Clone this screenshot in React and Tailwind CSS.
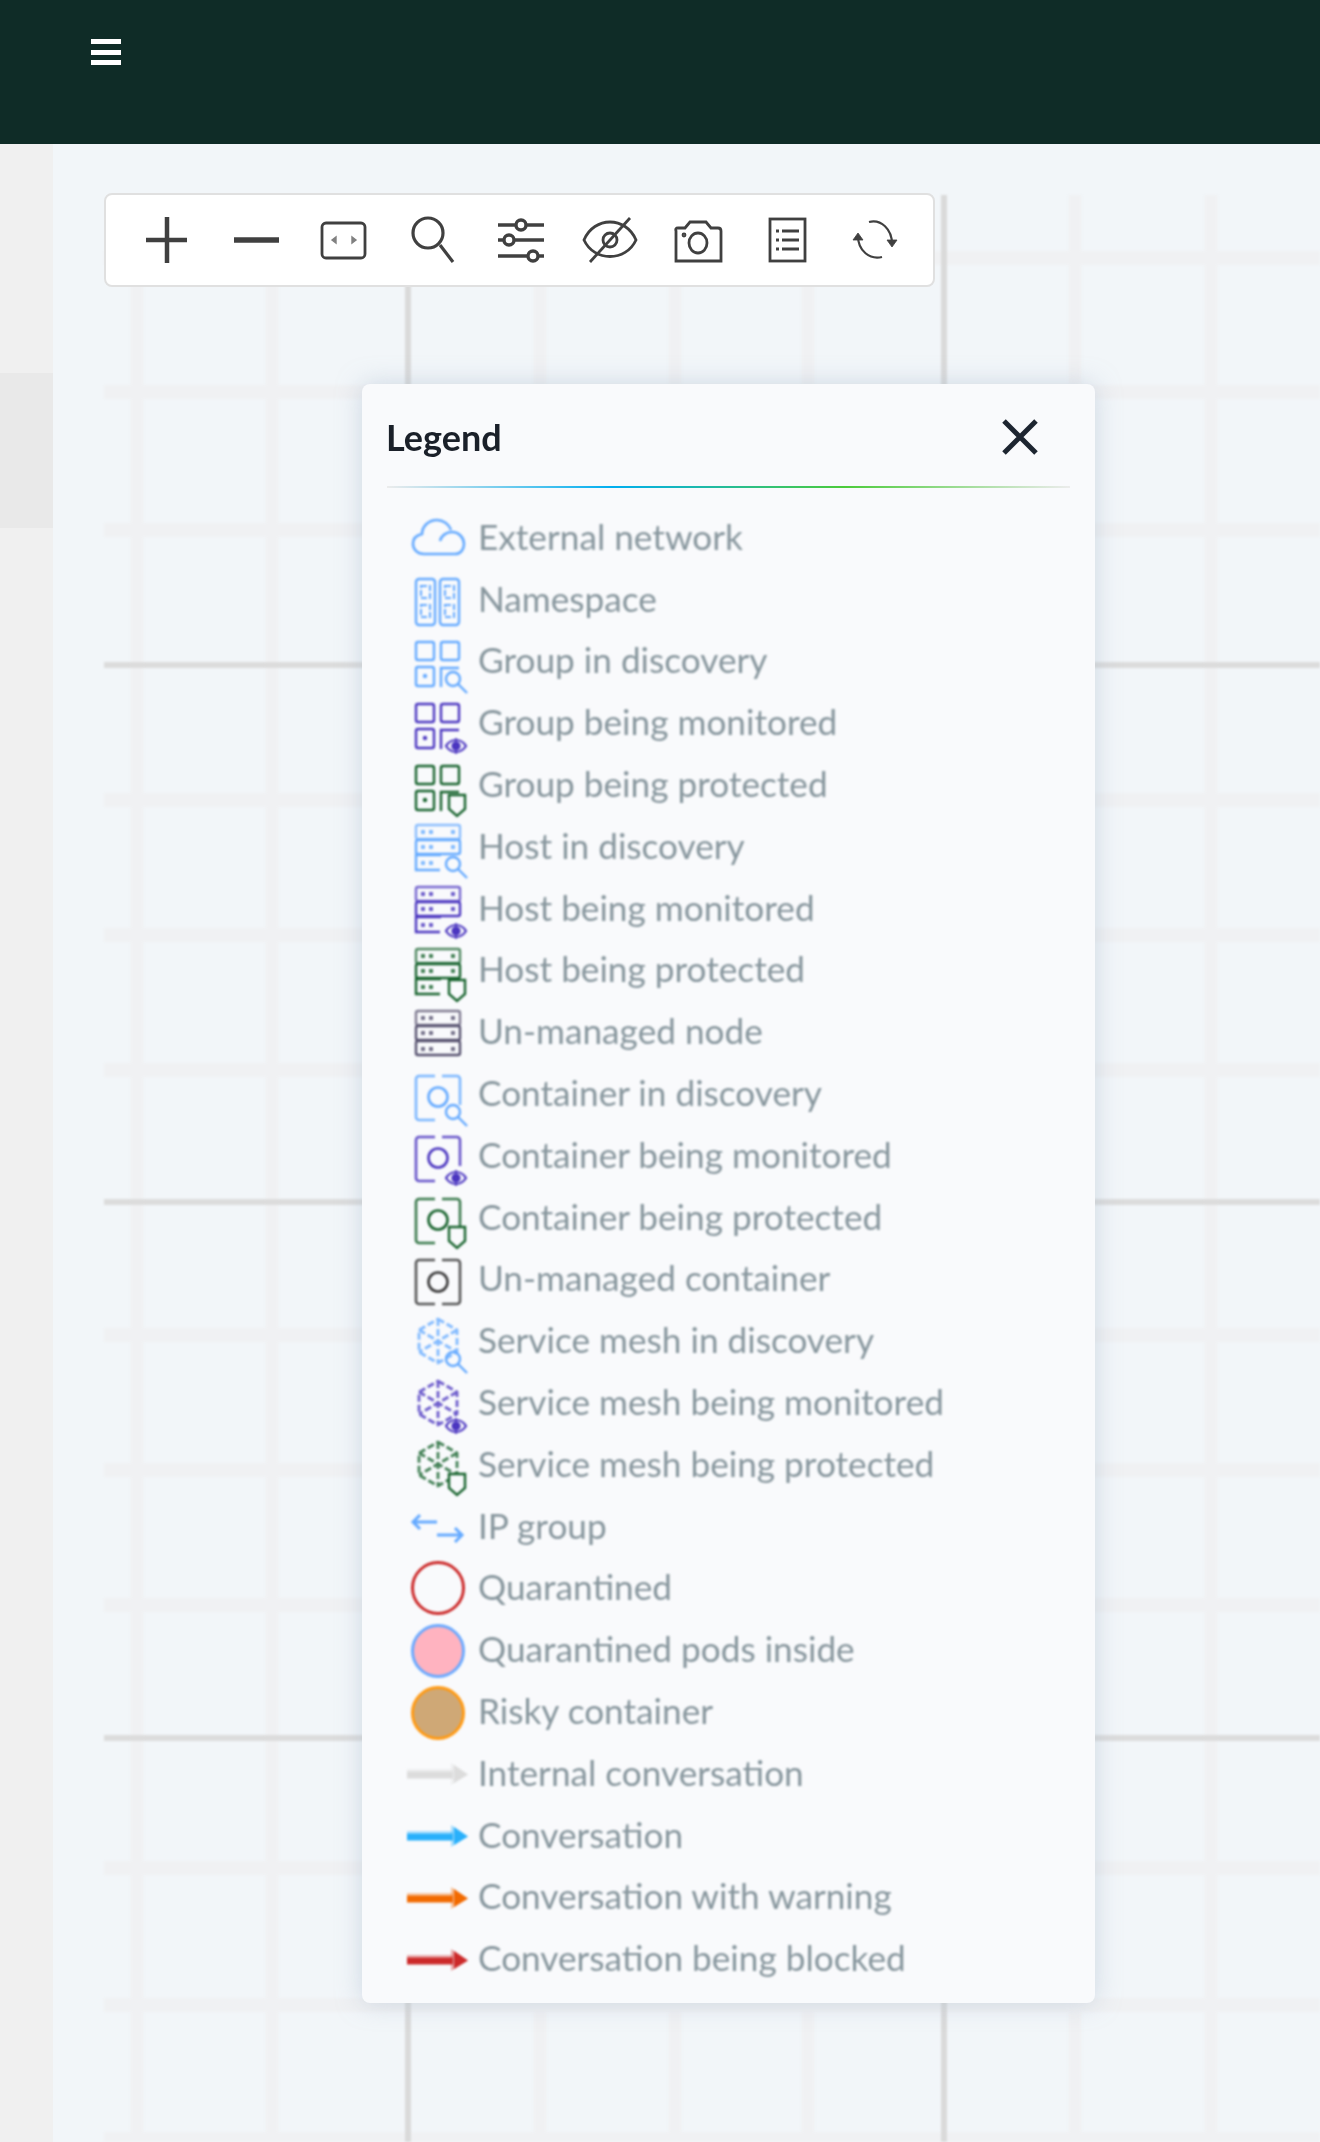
import React from "react";

const minorV = [33, 168, 436, 571, 704, 971, 1107];
const majorV = [304, 840];
const minorH = [63, 197, 335, 605, 740, 875, 1140, 1275, 1410, 1673, 1810, 1944];
const majorH = [470, 1007, 1543];

function Grid() {
  return (
    <svg className="absolute left-0 top-[2px] blur-[0.8px]" width="1216" height="1947" viewBox="0 0 1216 1947" fill="none">
      {minorH.map((y) => <path key={y} d={`M0 ${y}H1216`} stroke="#f0f1f3" strokeWidth="14" />)}
      {minorV.map((x) => <path key={x} d={`M${x} 0V1947`} stroke="#f0f1f3" strokeWidth="13" />)}
      {majorH.map((y) => <path key={y} d={`M0 ${y}H1216`} stroke="#dcdcdc" strokeWidth="6" />)}
      {majorV.map((x) => <path key={x} d={`M${x} 0V1947`} stroke="#dadada" strokeWidth="6" />)}
    </svg>
  );
}

const tool = { stroke: "#404040", fill: "none", strokeWidth: 2.8 };
const toolIcons = [
  <path d="M-21 0H20M0-23V23" {...tool} strokeWidth="4.5" />,
  <path d="M-22 0H23" {...tool} strokeWidth="5.5" />,
  <g {...tool}>
    <rect x="-22" y="-17" width="43" height="35" rx="4" />
    <path d="M-12 0L-8-3V3ZM12 0L8-3V3Z" fill="#808080" stroke="#808080" strokeWidth="1.4" />
  </g>,
  <g {...tool} strokeWidth="3.2">
    <circle cx="-5" cy="-7" r="15" />
    <path d="M7 5L20 22" />
  </g>,
  <g {...tool} strokeWidth="3.4">
    <path d="M-23-15H23M-23 0H23M-23 16H23" />
    <circle cx="0" cy="-15" r="5" fill="#fff" />
    <circle cx="-12" cy="0" r="5" fill="#fff" />
    <circle cx="12" cy="16" r="5" fill="#fff" />
  </g>,
  <g {...tool}>
    <path d="M-26 0C-16-24 16-24 26 0C16 22-16 22-26 0Z" />
    <circle cx="0" cy="0" r="7" />
    <path d="M20-22L-20 22" />
  </g>,
  <g {...tool}>
    <path d="M-22 21H23V-9Q23-12 20-12H13L8-18H-8L-13-12H-20Q-23-12-22-9Z" />
    <ellipse cx="0" cy="3" rx="9" ry="10" />
    <circle cx="-14" cy="-5" r="1" />
  </g>,
  <g {...tool}>
    <rect x="-17" y="-21" width="35" height="42" />
    <path d="M-5-9H12M-5 0H12M-5 9H12M-11-9H-8M-11 0H-8M-11 9H-8" />
  </g>,
  <g {...tool} strokeWidth="2.2">
    <path d="M-6-18C6-21 17-11 17 4M7 17C-5 20-17 11-17-4" />
    <path d="M12 0L17 7L22 0Z" fill="#404040" strokeWidth="0.8" />
    <path d="M-22 0L-17-7L-12 0Z" fill="#404040" strokeWidth="0.8" />
  </g>,
];

function Badge({ type, c }) {
  if (type === "search")
    return (
      <g stroke={c} fill="none" strokeWidth="2.4">
        <circle cx="48" cy="50" r="7" />
        <path d="M53 55L62 64" />
      </g>
    );
  if (type === "eye")
    return (
      <g stroke={c} fill="none" strokeWidth="2.2">
        <path d="M41 55C46 47 56 47 61 55C56 63 46 63 41 55Z" />
        <circle cx="51" cy="55" r="3.5" fill={c} />
        <path d="M51 47V63" strokeWidth="1.6" />
      </g>
    );
  if (type === "shield")
    return <path d="M44 42H60V56L52 63L44 56Z" fill="#f9fafc" stroke={c} strokeWidth="2.4" />;
  return null;
}

function Group({ c, badge }) {
  return (
    <g>
      <g stroke={c} fill="none" strokeWidth="2.4">
        <rect x="11" y="13" width="18" height="18" rx="2" />
        <rect x="36" y="13" width="18" height="18" rx="2" />
        <rect x="11" y="38" width="18" height="19" rx="2" />
        <circle cx="20" cy="47" r="1" />
        <path d="M36 58V39H54" />
      </g>
      <Badge type={badge} c={c} />
    </g>
  );
}

function Host({ c, badge }) {
  const dots = (y) => (
    <g fill={c} opacity="0.8">
      <rect x="16" y={y} width="4" height="4" />
      <rect x="24" y={y} width="4" height="4" />
      <rect x="46" y={y} width="4" height="4" />
    </g>
  );
  return (
    <g>
      <g stroke={c} fill="none" strokeWidth="2.4">
        <rect x="11" y="11" width="44" height="14" rx="2" opacity="0.75" />
        <rect x="11" y="26" width="44" height="14" rx="2" />
        {badge ? <path d="M36 41H11V56H35" /> : <rect x="11" y="41" width="44" height="14" rx="2" />}
      </g>
      {dots(16)}
      {dots(31)}
      <g fill={c} opacity="0.8">
        <rect x="16" y="47" width="4" height="4" />
        <rect x="24" y="47" width="4" height="4" />
        {!badge && <rect x="46" y="47" width="4" height="4" />}
      </g>
      <Badge type={badge} c={c} />
    </g>
  );
}

function Container({ c, badge }) {
  return (
    <g>
      <path
        d={badge ? "M30 14H14A3 3 0 0 0 11 17V55A3 3 0 0 0 14 58H30M37 14H52A3 3 0 0 1 55 17V43" : "M30 13H14A3 3 0 0 0 11 16V54A3 3 0 0 0 14 57H30M37 13H52A3 3 0 0 1 55 16V54A3 3 0 0 1 52 57H37"}
        stroke={c}
        fill="none"
        strokeWidth="2.6"
        opacity="0.85"
      />
      <circle cx="33" cy="35" r="9.5" stroke={c} fill="none" strokeWidth="2.6" />
      <Badge type={badge} c={c} />
    </g>
  );
}

function Mesh({ c, badge }) {
  return (
    <g>
      <g stroke={c} fill="none" strokeWidth="2.8" opacity="0.8" strokeDasharray="7 3">
        <path d="M33 10L52 21V43L33 54L14 43V21Z" />
        <path d="M33 10V54M14 21L52 43M52 21L14 43" />
      </g>
      <Badge type={badge} c={c} />
    </g>
  );
}

function Arrow({ c }) {
  return (
    <g>
      <rect x="2" y="28" width="46" height="3.5" fill={c} opacity="0.35" />
      <rect x="2" y="30.5" width="46" height="7" fill={c} />
      <path d="M46 22L63 33.5L46 44Z" fill={c} opacity="0.4" />
      <path d="M49 24L63 33.5L49 42Z" fill={c} />
    </g>
  );
}

const B = "#65aaff";
const P = "#4b36c0";
const G = "#17632d";

const rows = [
  ["External network", (
    <path d="M19 49H50C56 49 59 44 59 39C59 33 54 27 47 27C41 27 36 31 35 36M19 49C12 49 8 44 8 39C8 33 12 30 17 29C17 21 24 15 32 15C38 15 44 19 46 25" stroke={B} fill="none" strokeWidth="2.6" />
  )],
  ["Namespace", (
    <g stroke={B} fill="none" strokeWidth="2.4">
      <rect x="11" y="12" width="19" height="46" rx="3" />
      <rect x="35" y="12" width="19" height="46" rx="3" />
      <path d="M16 19h9v12h-9zM16 38h9v12h-9zM40 19h9v12h-9zM40 38h9v12h-9z" strokeWidth="2" strokeDasharray="6 2" />
    </g>
  )],
  ["Group in discovery", <Group c={B} badge="search" />],
  ["Group being monitored", <Group c={P} badge="eye" />],
  ["Group being protected", <Group c={G} badge="shield" />],
  ["Host in discovery", <Host c={B} badge="search" />],
  ["Host being monitored", <Host c={P} badge="eye" />],
  ["Host being protected", <Host c={G} badge="shield" />],
  ["Un-managed node", <Host c="#55506e" />],
  ["Container in discovery", <Container c={B} badge="search" />],
  ["Container being monitored", <Container c={P} badge="eye" />],
  ["Container being protected", <Container c={G} badge="shield" />],
  ["Un-managed container", <Container c="#3a3a3a" />],
  ["Service mesh in discovery", <Mesh c={B} badge="search" />],
  ["Service mesh being monitored", <Mesh c={P} badge="eye" />],
  ["Service mesh being protected", <Mesh c={G} badge="shield" />],
  ["IP group", (
    <path d="M32 28H8M15 21L8 28L15 35M32 41H57M50 34L57 41L50 48" stroke={B} fill="none" strokeWidth="3" />
  )],
  ["Quarantined", <circle cx="33" cy="32" r="25.5" stroke="#cc2b2b" fill="none" strokeWidth="3" />],
  ["Quarantined pods inside", <circle cx="33" cy="33" r="25.5" stroke="#6aa9ff" fill="#ffb3c0" strokeWidth="3" />],
  ["Risky container", <circle cx="33" cy="33" r="25.5" stroke="#ff9a14" fill="#cfa876" strokeWidth="3" />],
  ["Internal conversation", <Arrow c="#dcdcdc" />],
  ["Conversation", <Arrow c="#29b0fb" />],
  ["Conversation with warning", <Arrow c="#f26a00" />],
  ["Conversation being blocked", <Arrow c="#cc2a2a" />],
];

export default function App() {
  return (
    <div className="flex h-screen flex-col overflow-hidden font-['Lato',sans-serif]">
      <header className="h-[144px] shrink-0 bg-[#0f2c27] pl-[91px] pt-[38px]">
        <svg className="blur-[0.6px]" width="30" height="28" viewBox="0 0 30 28" fill="#ffffff">
          <rect x="0" y="1" width="30" height="5" />
          <rect x="0" y="12" width="30" height="5" />
          <rect x="0" y="22" width="30" height="5" />
        </svg>
      </header>
      <div className="flex flex-1">
        <aside className="w-[53px] shrink-0 bg-[#f0f0f0] pt-[229px]">
          <div className="h-[155px] bg-[#e9e9e9]" />
        </aside>
        <main className="flex-1 bg-[#f2f6f9] pl-[51px] pt-[49px]">
          <div className="relative h-full">
            <Grid />
            <div className="relative flex h-[94px] w-[831px] items-center rounded-lg border-2 border-[#e0e0e0] bg-white pl-[17px]">
              {toolIcons.map((icon, i) => (
                <div key={i} className="flex w-[88.5px] shrink-0 items-center justify-center">
                  <svg className="blur-[0.7px]" width="64" height="64" viewBox="-32 -32 64 64" overflow="visible">{icon}</svg>
                </div>
              ))}
            </div>
            <section className="absolute left-[258px] top-[191px] w-[733px] rounded-lg bg-[#f9fafc] pb-[14px] shadow-[0_0_24px_rgba(170,185,205,0.5)]">
              <div className="flex h-[102px] items-center justify-between pl-[24px] pr-[56px] pt-[3px]">
                <h2 className="text-[36px] font-bold leading-none text-[#1a2029] blur-[0.6px]">Legend</h2>
                <svg className="blur-[0.6px]" width="38" height="38" viewBox="0 0 38 38" fill="none" stroke="#1d2530" strokeWidth="5">
                  <path d="M3 3L35 35M35 3L3 35" />
                </svg>
              </div>
              <div className="ml-[25px] h-[2px] w-[683px] bg-[linear-gradient(90deg,#ececec,#00aef0_33%,#4ccb3a_67%,#ececec)]" />
              <ul className="pl-[43px] pt-[17.5px] blur-[0.8px]">
                {rows.map(([label, icon]) => (
                  <li key={label} className="flex h-[61.8px] items-center">
                    <svg width="64" height="62" viewBox="0 0 64 62" overflow="visible" className="shrink-0">{icon}</svg>
                    <span className="ml-[9px] text-[35.2px] leading-none text-[#87969d]">{label}</span>
                  </li>
                ))}
              </ul>
            </section>
          </div>
        </main>
      </div>
    </div>
  );
}
